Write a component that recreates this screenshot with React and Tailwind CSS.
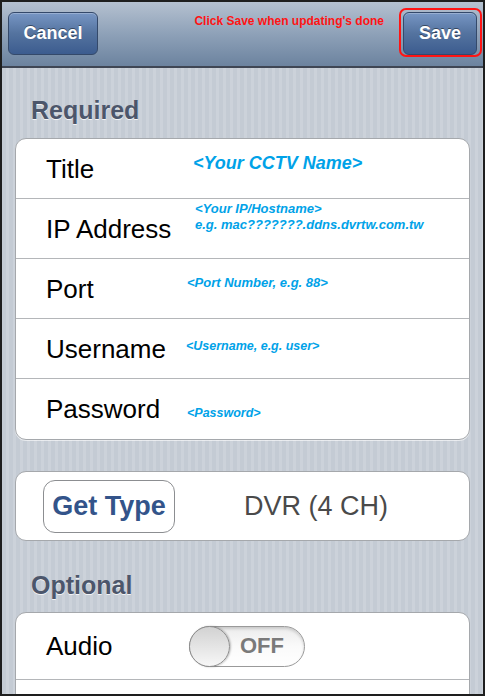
import React from "react";

const font = { fontFamily: '"Liberation Sans", Arial, sans-serif' };

function Row({ label, hint, last }) {
  return (
    <div
      className={`flex items-start ${last ? "h-[60px]" : "h-[60px] border-b border-[#b4b6b9]"}`}
    >
      <div className="w-[170px] shrink-0 self-center pl-[30px] text-[26px] leading-none text-black">
        {label}
      </div>
      {hint}
    </div>
  );
}

const hintCls = "font-bold italic text-[#00a2e8]";

export default function App() {
  return (
    <div
      style={font}
      className="w-[485px] h-[696px] overflow-hidden border-2 border-[#1e1e1e] bg-[repeating-linear-gradient(90deg,#c4cbd4_0px,#c4cbd4_4px,#ccd2da_4px,#ccd2da_7px)]"
    >
      {/* nav bar */}
      <div className="flex items-start h-[66px] border-b-2 border-[#3f4654] bg-linear-to-b from-[#b5c1d0] via-[#8ea1b8] to-[#6c839f] pl-[6px] pr-[6px]">
        <button className="mt-[10px] w-[90px] h-[43px] rounded-[6px] border border-[#34496a] bg-linear-to-b from-[#7796c4] via-[#54739f] to-[#3c5c8f] text-white font-bold text-[18px] shadow-[inset_0_1px_0_rgba(255,255,255,0.25)] [text-shadow:0_-1px_0_rgba(0,0,0,0.45)]">
          Cancel
        </button>
        <div className="flex-1" />
        <div className="mt-[13px] mr-[19px] text-[12px] leading-none font-bold text-[#ff1414]">
          Click Save when updating's done
        </div>
        <div className="relative mt-[10px]">
          <button className="w-[74px] h-[43px] rounded-[6px] border border-[#34496a] bg-linear-to-b from-[#7796c4] via-[#54739f] to-[#3c5c8f] text-white font-bold text-[18px] shadow-[inset_0_1px_0_rgba(255,255,255,0.25)] [text-shadow:0_-1px_0_rgba(0,0,0,0.45)]">
            Save
          </button>
          <div className="absolute -left-[4px] -top-[4px] w-[83px] h-[49px] rounded-[7px] border-2 border-[#ff1414]" />
        </div>
      </div>

      {/* Required */}
      <div className="mt-[30px] pl-[29px] text-[25px] leading-none font-bold text-[#4c566b] [text-shadow:0_1px_0_rgba(255,255,255,0.8)]">
        Required
      </div>
      <div className="mx-[13px] mt-[15px] rounded-[11px] border border-[#a5a8ac] bg-white shadow-[0_1px_0_rgba(255,255,255,0.6)]">
        <Row
          label="Title"
          hint={<div className={`${hintCls} leading-none ml-[7px] mt-[15px] text-[18px]`}>&lt;Your CCTV Name&gt;</div>}
        />
        <Row
          label="IP Address"
          hint={
            <div className={`${hintCls} ml-[9px] mt-[2px] text-[13px] leading-[16px]`}>
              <div>&lt;Your IP/Hostname&gt;</div>
              <div>e.g. mac???????.ddns.dvrtw.com.tw</div>
            </div>
          }
        />
        <Row
          label="Port"
          hint={<div className={`${hintCls} leading-none ml-[1px] mt-[17px] text-[13px]`}>&lt;Port Number, e.g. 88&gt;</div>}
        />
        <Row
          label="Username"
          hint={<div className={`${hintCls} leading-none ml-[0px] mt-[21px] text-[12.5px]`}>&lt;Username, e.g. user&gt;</div>}
        />
        <Row
          label="Password"
          last
          hint={<div className={`${hintCls} leading-none ml-[1px] mt-[28px] text-[12.5px]`}>&lt;Password&gt;</div>}
        />
      </div>

      {/* Get type */}
      <div className="mx-[13px] mt-[31px] h-[70px] rounded-[11px] border border-[#a5a8ac] bg-white flex items-center pl-[27px]">
        <button className="w-[132px] h-[53px] rounded-[12px] border border-[#8c8e91] bg-white text-[27px] leading-none font-bold text-[#33548a]">
          Get Type
        </button>
        <div className="ml-[69px] text-[27px] leading-none text-[#4a4a4a]">DVR (4 CH)</div>
      </div>

      {/* Optional */}
      <div className="mt-[32px] pl-[29px] text-[25px] leading-none font-bold text-[#4c566b] [text-shadow:0_1px_0_rgba(255,255,255,0.8)]">
        Optional
      </div>
      <div className="mx-[13px] mt-[14px] rounded-t-[11px] border border-[#a5a8ac] bg-white h-[120px]">
        <div className="flex items-center h-[67px] border-b border-[#b4b6b9]">
          <div className="w-[173px] shrink-0 pl-[30px] text-[26px] leading-none text-black">Audio</div>
          <div className="relative flex items-center w-[116px] h-[41px] rounded-full border border-[#9a9a9a] bg-linear-to-b from-[#ececec] via-[#fafafa] to-white shadow-[inset_0_2px_3px_rgba(0,0,0,0.15)]">
            <div className="w-[41px] h-[41px] -ml-px rounded-full border border-[#8d8d8d] bg-linear-to-b from-[#d2d2d2] to-[#f7f7f7] shadow-[1px_0_2px_rgba(0,0,0,0.25)]" />
            <div className="ml-[10px] text-[22px] leading-none font-bold text-[#7a7a7a]">OFF</div>
          </div>
        </div>
      </div>
    </div>
  );
}
